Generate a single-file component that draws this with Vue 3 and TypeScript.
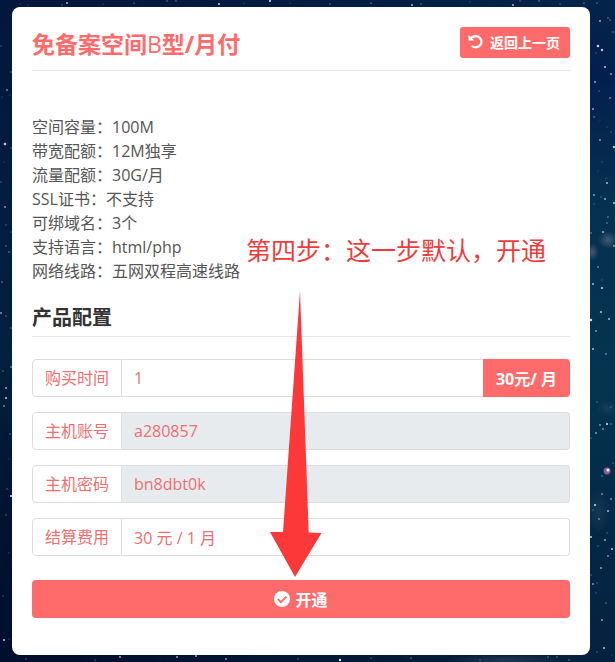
<script setup lang="ts">
import { ref } from 'vue'

interface Spec {
  name: string
  value: string
}

const specs: Spec[] = [
  { name: '空间容量', value: '100M' },
  { name: '带宽配额', value: '12M独享' },
  { name: '流量配额', value: '30G/月' },
  { name: 'SSL证书', value: '不支持' },
  { name: '可绑域名', value: '3个' },
  { name: '支持语言', value: 'html/php' },
  { name: '网络线路', value: '五网双程高速线路' },
]

const months = ref('1')
const account = ref('a280857')
const password = ref('bn8dbt0k')
const total = ref('30 元 / 1 月')

// Star field: x, y, radius, opacity
const stars: number[][] = [
  [67, 3, 1, 0.8], [62, 5, 0.7, 0.5], [28, 5, 0.6, 0.4], [20, 4, 0.6, 0.4], [103, 4, 0.6, 0.4], [134, 3, 0.7, 0.5],
  [167, 1, 0.8, 0.5], [176, 1, 0.8, 0.5], [219, 4, 1, 0.9], [244, 3, 0.6, 0.4], [270, 1, 1.1, 0.9], [290, 3, 0.6, 0.4],
  [330, 4, 0.7, 0.5], [371, 3, 0.7, 0.6], [412, 5, 1, 0.8], [421, 4, 0.7, 0.5], [470, 2, 0.6, 0.4], [513, 5, 1, 0.8],
  [520, 1, 0.7, 0.5], [539, 1, 0.8, 0.6], [560, 4, 0.7, 0.5],
  [1, 46, 0.7, 0.4], [11, 72, 0.7, 0.5], [7, 90, 0.9, 0.6], [2, 97, 0.6, 0.4], [10, 95, 0.6, 0.3], [5, 144, 1.3, 0.9],
  [11, 148, 0.7, 0.4], [4, 162, 0.6, 0.3], [1, 182, 0.7, 0.5], [5, 207, 0.9, 0.7], [6, 225, 0.7, 0.4], [11, 232, 0.6, 0.5],
  [6, 246, 0.8, 0.5], [9, 252, 0.8, 0.6], [2, 282, 0.8, 0.6], [1, 313, 0.9, 0.7], [6, 316, 0.7, 0.5], [11, 328, 0.7, 0.5],
  [3, 371, 0.7, 0.5], [11, 367, 0.8, 0.8], [6, 388, 0.9, 0.8], [6, 398, 1, 0.9], [4, 406, 0.9, 0.6], [10, 434, 0.8, 0.5],
  [9, 459, 0.6, 0.3], [7, 489, 0.7, 0.5], [11, 496, 1.1, 1], [6, 515, 0.7, 0.5], [9, 553, 0.7, 0.3], [3, 596, 0.8, 0.3],
  [4, 640, 1, 0.9], [9, 639, 0.7, 0.3],
  [584, 3, 0.8, 0.5], [597, 3, 0.7, 0.5], [600, 21, 1, 0.7], [608, 18, 0.8, 0.5], [610, 20, 0.8, 0.5], [613, 32, 0.8, 0.5],
  [598, 46, 1.3, 0.9], [602, 50, 1.2, 0.9], [596, 53, 0.6, 0.5], [605, 67, 1, 0.9], [611, 74, 0.9, 0.7], [595, 82, 1, 0.7],
  [599, 91, 0.7, 0.5], [610, 98, 0.9, 0.6], [593, 109, 1, 0.7], [594, 117, 0.8, 0.6], [600, 120, 0.6, 0.3], [607, 127, 0.6, 0.4],
  [600, 140, 1, 0.6], [611, 132, 0.7, 0.4], [614, 147, 1.2, 0.9], [602, 162, 0.7, 0.3], [606, 178, 0.7, 0.3], [607, 183, 1, 0.8],
  [598, 171, 0.6, 0.3], [594, 195, 0.9, 0.7], [601, 197, 0.7, 0.4], [605, 199, 1, 0.7], [614, 203, 1, 0.9], [594, 204, 0.7, 0.4],
  [608, 217, 0.8, 0.6], [607, 223, 0.9, 0.4], [603, 232, 1, 0.8], [591, 233, 0.8, 0.6], [614, 246, 1, 0.7], [598, 267, 0.9, 0.5],
  [593, 284, 1, 0.8], [602, 288, 1.1, 0.9], [602, 280, 0.6, 0.5], [601, 312, 1.1, 0.8], [591, 320, 1.2, 1], [609, 319, 1, 0.8],
  [596, 331, 0.9, 0.6], [593, 349, 1, 0.8], [606, 354, 0.9, 0.5], [597, 402, 0.8, 0.4], [611, 407, 0.7, 0.4], [607, 424, 1.1, 1],
  [600, 425, 0.9, 0.6], [603, 429, 0.9, 0.6], [611, 424, 0.8, 0.5], [596, 433, 0.9, 0.7], [591, 438, 0.7, 0.4], [613, 463, 0.7, 0.4],
  [602, 476, 0.8, 0.5], [602, 494, 0.9, 0.6], [595, 505, 1.1, 0.9], [608, 511, 1, 0.8], [611, 499, 0.9, 0.6], [599, 519, 1, 0.5],
  [593, 510, 0.7, 0.4], [591, 537, 1.1, 0.9], [605, 540, 1, 0.7], [598, 546, 0.7, 0.4], [612, 549, 1.1, 0.8], [607, 533, 0.7, 0.4],
  [608, 556, 0.9, 0.6], [601, 568, 1, 0.7], [593, 584, 1, 0.6], [597, 583, 0.7, 0.4], [596, 593, 0.7, 0.4], [606, 603, 0.8, 0.5],
  [591, 575, 0.7, 0.5], [602, 620, 1, 0.7], [604, 648, 1.1, 0.8], [597, 652, 0.7, 0.4], [612, 655, 0.6, 0.3],
  [26, 659, 0.8, 0.4], [95, 660, 0.7, 0.5], [120, 657, 0.9, 0.8], [177, 657, 0.9, 0.8], [196, 656, 0.9, 0.8], [226, 659, 0.9, 0.7],
  [298, 659, 0.7, 0.5], [340, 660, 1.2, 1], [371, 658, 0.7, 0.4], [411, 658, 0.8, 0.5], [480, 660, 0.7, 0.4], [548, 657, 0.8, 0.5],
  [557, 657, 0.8, 0.5], [569, 660, 0.8, 0.5],
]
</script>

<template>
  <div class="page">
    <svg class="sky" viewBox="0 0 615 662" preserveAspectRatio="none" aria-hidden="true">
      <defs>
        <linearGradient id="left-sky" x1="0" y1="0" x2="0" y2="1">
          <stop offset="0" stop-color="#02173b" />
          <stop offset="0.25" stop-color="#021c40" />
          <stop offset="0.55" stop-color="#02203f" />
          <stop offset="0.78" stop-color="#011233" />
          <stop offset="1" stop-color="#010f2f" />
        </linearGradient>
        <linearGradient id="right-sky" x1="0" y1="0" x2="0" y2="1">
          <stop offset="0" stop-color="#03244a" />
          <stop offset="0.12" stop-color="#02204f" />
          <stop offset="0.3" stop-color="#06304f" />
          <stop offset="0.58" stop-color="#033450" />
          <stop offset="0.85" stop-color="#032645" />
          <stop offset="1" stop-color="#06213f" />
        </linearGradient>
        <linearGradient id="fade" x1="0" y1="0" x2="1" y2="0">
          <stop offset="0.1" stop-color="#000" />
          <stop offset="0.95" stop-color="#fff" />
        </linearGradient>
        <mask id="blend"><rect width="615" height="662" fill="url(#fade)" /></mask>
        <radialGradient id="dust">
          <stop offset="0" stop-color="#7d8490" stop-opacity="0.5" />
          <stop offset="1" stop-color="#7d8490" stop-opacity="0" />
        </radialGradient>
      </defs>
      <rect width="615" height="662" fill="url(#left-sky)" />
      <rect width="615" height="662" fill="url(#right-sky)" mask="url(#blend)" />
      <ellipse cx="608" cy="240" rx="10" ry="9" fill="url(#dust)" />
      <ellipse cx="592" cy="252" rx="7" ry="9" fill="url(#dust)" />
      <ellipse cx="598" cy="512" rx="12" ry="22" fill="url(#dust)" opacity="0.3" />
      <ellipse cx="607" cy="408" rx="10" ry="8" fill="url(#dust)" opacity="0.3" />
      <ellipse cx="505" cy="660" rx="60" ry="6" fill="url(#dust)" opacity="0.5" />
      <circle v-for="(s, i) in stars" :key="i" :cx="s[0]" :cy="s[1]" :r="s[2]" fill="#cfe4f7" :opacity="s[3]" />
      <circle cx="607" cy="471" r="3.4" fill="#8b5f93" />
      <circle cx="608" cy="470" r="1.6" fill="#f3e2fa" />
    </svg>

    <main class="card">
      <header class="head">
        <h1 class="title">免备案空间<span class="latin">B</span>型/月付</h1>
        <button type="button" class="back">
          <svg class="back-icon" viewBox="0 0 16 16" aria-hidden="true">
            <path d="M0.5 0.8L2.6 2.8L4 4.2L6.8 6.9H0.5Z" fill="currentColor" />
            <path d="M3 4.4C4.4 2.9 6.4 2.2 8.4 2.2A6 6 0 1 1 4.2 12.6" fill="none" stroke="currentColor" stroke-width="2.4" />
          </svg>
          返回上一页
        </button>
      </header>

      <ul class="specs">
        <li v-for="s in specs" :key="s.name">{{ s.name }}：{{ s.value }}</li>
      </ul>

      <h2 class="subtitle">产品配置</h2>

      <form class="form" @submit.prevent>
        <div class="group">
          <label for="months">购买时间</label>
          <input id="months" v-model="months" type="text" />
          <button type="button" class="price">30元/ 月</button>
        </div>
        <div class="group">
          <label for="account">主机账号</label>
          <input id="account" v-model="account" type="text" class="locked" readonly />
        </div>
        <div class="group">
          <label for="password">主机密码</label>
          <input id="password" v-model="password" type="text" class="locked" readonly />
        </div>
        <div class="group">
          <label for="total">结算费用</label>
          <input id="total" v-model="total" type="text" />
        </div>
        <button type="submit" class="submit">
          <svg class="check" viewBox="0 0 16 16" aria-hidden="true">
            <circle cx="8" cy="8" r="8" fill="currentColor" />
            <path d="M3.7 8L6.9 11.1L12.4 5.6" fill="none" stroke="#ff6b6b" stroke-width="1.9" />
          </svg>
          开通
        </button>
      </form>

      <p class="note">第四步：这一步默认，开通</p>
      <svg class="arrow" viewBox="0 0 52 287" aria-hidden="true">
        <polygon points="30,1 38.7,242.5 51.5,243 25,287 0,242 13,242" fill="#fd3838" />
      </svg>
    </main>
  </div>
</template>

<style>
body {
  margin: 0;
  background: #02173b;
}
</style>

<style scoped>
.page {
  position: relative;
  box-sizing: border-box;
  min-height: 100vh;
  padding: 7px 25px 7px 12px;
  font-family: "Open Sans", "Noto Sans CJK SC", sans-serif;
  font-size: 16px;
  line-height: 24px;
  color: #555;
}

.sky {
  position: absolute;
  inset: 0;
  width: 100%;
  height: 100%;
}

.card {
  position: relative;
  padding: 20px 20px 37px;
  border-radius: 8px;
  background: #fff;
}

.head {
  display: flex;
  align-items: center;
  justify-content: space-between;
  padding-bottom: 12px;
  border-bottom: 1px solid #e8e8e8;
}

.title {
  margin: 0;
  padding-top: 4px;
  font-size: 23px;
  line-height: 27px;
  font-weight: 700;
  color: #ff6b6b;
}

.latin {
  font-weight: 400;
}

button {
  border: 0;
  font-family: inherit;
  font-weight: 700;
  color: #fff;
  background: #ff6b6b;
  cursor: pointer;
}

.back {
  display: flex;
  align-items: center;
  gap: 7px;
  height: 31px;
  padding: 0 10px 2px 8px;
  border-radius: 3px;
  font-size: 14px;
}

.back-icon {
  width: 15px;
  height: 15px;
}

.specs {
  margin: 44px 0 0;
  padding: 0;
  list-style: none;
}

.subtitle {
  margin: 23px 0 0;
  padding-bottom: 6px;
  border-bottom: 1px solid #e8e8e8;
  font-size: 20px;
  line-height: 24px;
  font-weight: 700;
  color: #333;
}

.form {
  display: flex;
  flex-direction: column;
  gap: 15px;
  margin-top: 22px;
}

.group {
  display: flex;
  height: 38px;
}

label,
input {
  box-sizing: border-box;
  border: 1px solid #ddd;
  padding: 0 12px;
  font-size: 16px;
  color: #ef6e6e;
}

label {
  line-height: 36px;
  border-radius: 4px 0 0 4px;
}

input {
  flex: 1;
  min-width: 0;
  border-left: 0;
  border-radius: 0 4px 4px 0;
  font-family: inherit;
  background: #fff;
  outline: 0;
}

.locked {
  background: #e8ebee;
}

.group:first-child input {
  border-right: 0;
  border-radius: 0;
}

.price {
  padding: 0 13px;
  border-radius: 0 4px 4px 0;
  font-size: 16px;
}

.submit {
  display: flex;
  align-items: center;
  justify-content: center;
  gap: 5px;
  height: 38px;
  margin-top: 9px;
  border-radius: 4px;
  font-size: 16px;
}

.check {
  width: 16px;
  height: 16px;
}

.note {
  position: absolute;
  top: 225px;
  left: 234px;
  margin: 0;
  font-size: 25px;
  line-height: 36px;
  white-space: nowrap;
  color: #ee3c3c;
}

.arrow {
  position: absolute;
  top: 283px;
  left: 258px;
  width: 52px;
  height: 287px;
  pointer-events: none;
}
</style>
